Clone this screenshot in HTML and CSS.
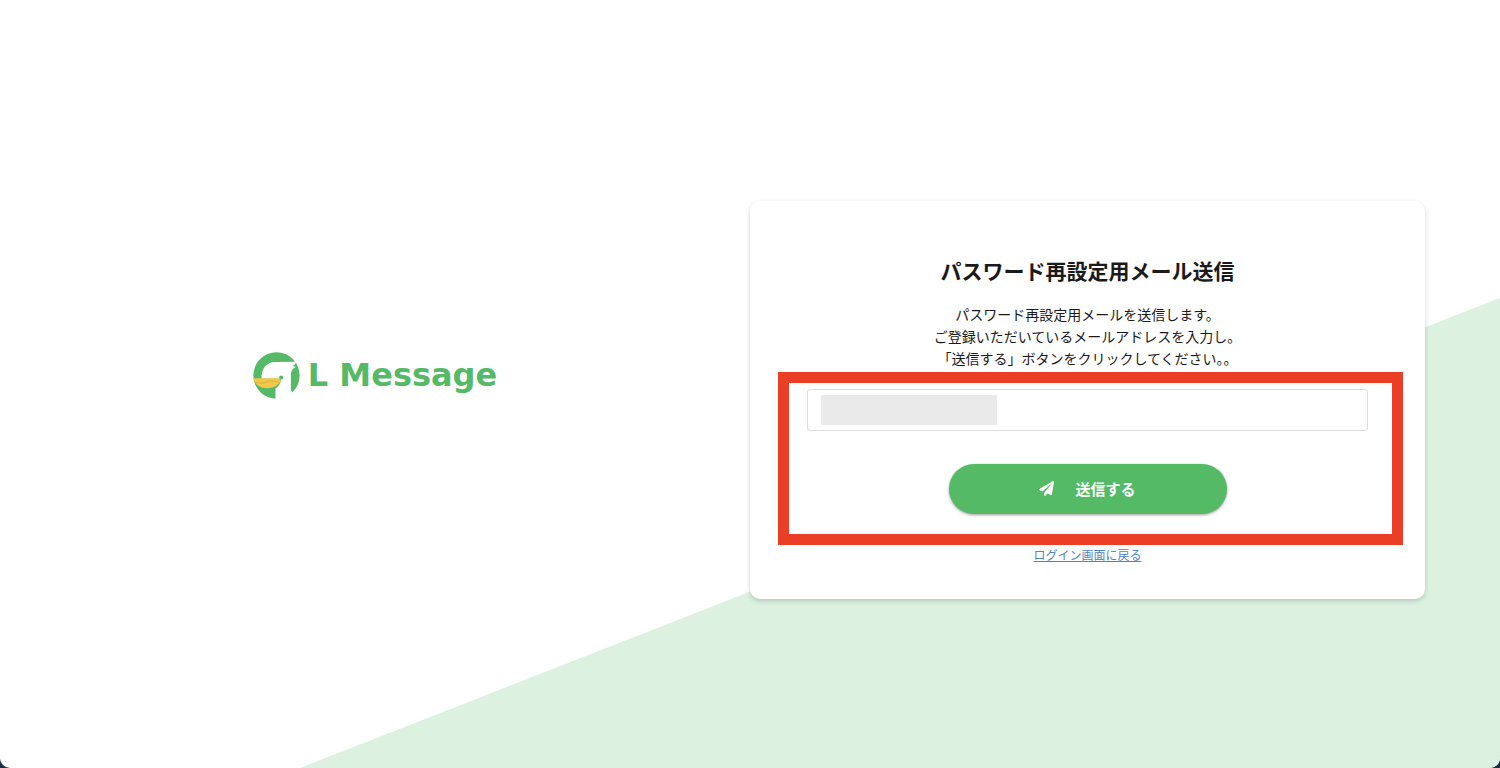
FILE: index.html
```html
<!DOCTYPE html>
<html lang="ja">
    <head>
        <meta charset="utf-8">
        <meta name="viewport" content="width=device-width, initial-scale=1">
        <link rel="stylesheet" href="styles.css">
        <title>パスワード再設定用メール送信</title>
    </head>
    <body>
        <div class="page">
            <div class="logo">
                <svg class="logo-mark" viewBox="0 0 140 140" aria-hidden="true">
                    <circle cx="70" cy="70" r="69" fill="#55ba66"/>
                    <path fill="#fff" d="M25 79C25 50 40 30 66 30L129 29C127 35 123 39 118 42L128 45C119 49 113 56 113 66L113 112C113 118 116 120 120 118L126 140L67 140L67 109C76 104 82 95 84 80Z"/>
                    <path fill="#f1c84c" d="M1 78L84 78C82 95 64 108 41 108C20 108 4 96 1 78Z"/>
                    <path fill="none" stroke="#dfb140" stroke-width="3" d="M6 90C24 96 32 93 43 87C53 82 62 90 76 87"/>
                    <circle cx="84" cy="76" r="6" fill="#55ba66"/>
                </svg>
                <span class="logo-text">L Message</span>
            </div>
            <div class="card">
                <h1>パスワード再設定用メール送信</h1>
                <p>パスワード再設定用メールを送信します。<br>ご登録いただいているメールアドレスを入力し。<br>「送信する」ボタンをクリックしてください。。</p>
                <form class="form">
                    <div class="field">
                        <input type="email" id="email" name="email" aria-label="メールアドレス">
                        <span class="mask"></span>
                    </div>
                    <button type="submit">
                        <svg class="plane" viewBox="0 0 512 512" aria-hidden="true">
                            <path fill="#fff" d="M476 3L12 271c-18 10-16 36 2 43l107 45L408 106c6-5 13 3 9 8L176 408v80c0 24 28 33 42 16l64-78 125 53c14 6 31-3 33-19L512 28c3-20-19-34-36-25z"/>
                        </svg>
                        送信する
                    </button>
                    <div class="highlight"></div>
                </form>
                <a href="#" class="back">ログイン画面に戻る</a>
            </div>
        </div>
    </body>
</html>
```
FILE: styles.css
```css
html {
    background-color: #1d2b4d;
}
body {
    margin: 0;
    color: #1a1a1a;
    font-family: "Noto Sans CJK JP", sans-serif;
}
.page {
    display: grid;
    grid-template-columns: 1fr 1fr;
    align-items: center;
    min-height: 100vh;
    border-radius: 0 0 10px 10px;
    /* green slope from the bottom left up to the right edge */
    position: relative;
    overflow: hidden;
    background-color: #fff;
}
.page::before {
    content: "";
    position: absolute;
    inset: 0;
    background-color: #dcf1e0;
    clip-path: polygon(20% 100%, 100% 38.8%, 100% 100%);
}
.logo {
    display: flex;
    align-items: center;
    justify-content: center;
    gap: 8px;
    padding-bottom: 18px;
    position: relative;
}
.logo-mark {
    width: 47px;
    height: 47px;
}
.logo-text {
    color: #55ba66;
    font-family: "DejaVu Sans", Verdana, sans-serif;
    font-size: 32px;
    font-weight: bold;
    line-height: 48px;
}
.card {
    position: relative;
    margin: 32px 10% 0 0;
    padding: 54px 57px 34px;
    background-color: #fff;
    border-radius: 10px;
    box-shadow: 0 2px 5px rgba(0, 0, 0, 0.18);
    text-align: center;
}
h1 {
    margin: 0 0 18px;
    font-size: 21px;
    font-weight: bold;
    line-height: 30px;
}
p {
    margin: 0 0 20px;
    font-size: 14px;
    line-height: 22px;
}
.form {
    position: relative;
    margin-bottom: 31px;
}
.field {
    position: relative;
    margin-bottom: 33px;
}
input {
    display: block;
    box-sizing: border-box;
    width: 100%;
    height: 42px;
    padding: 0 12px;
    border: 1px solid #ddd;
    border-radius: 3px;
    background-color: #fff;
    font-size: 14px;
}
.mask {
    position: absolute;
    top: 6px;
    left: 14px;
    width: 176px;
    height: 30px;
    background-color: #eaeaea;
}
button {
    display: flex;
    align-items: center;
    justify-content: center;
    gap: 21px;
    width: 278px;
    height: 50px;
    margin: 0 auto;
    padding: 0 0 2px;
    border: 0;
    border-radius: 25px;
    background-color: #55ba66;
    box-shadow: 0 1px 3px rgba(0, 0, 0, 0.4);
    color: #fff;
    font-family: inherit;
    font-size: 15px;
    font-weight: bold;
}
.plane {
    width: 15px;
    height: 15px;
}
.highlight {
    position: absolute;
    inset: -17px -35px -31px -29px;
    border: 11px solid #ea3f25;
    pointer-events: none;
}
.back {
    display: block;
    color: #4f86c2;
    font-size: 12px;
    line-height: 20px;
}
```
